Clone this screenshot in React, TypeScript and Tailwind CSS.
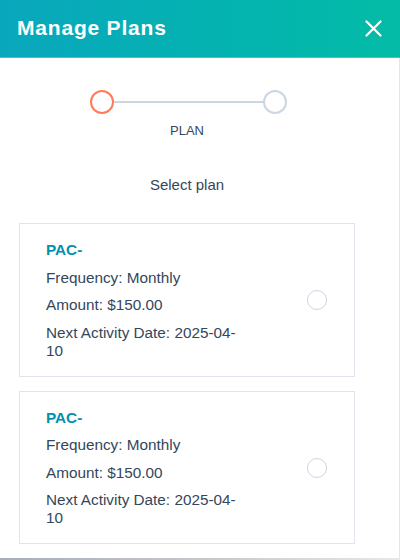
import React from "react";

type Plan = {
  id: string;
  name: string;
  frequency: string;
  amount: string;
  nextDate: [string, string];
};

const plans: Plan[] = [
  { id: "1", name: "PAC-", frequency: "Monthly", amount: "$150.00", nextDate: ["2025-04-", "10"] },
  { id: "2", name: "PAC-", frequency: "Monthly", amount: "$150.00", nextDate: ["2025-04-", "10"] },
];

const CloseIcon = () => (
  <svg width="17" height="17" viewBox="0 0 17 17" fill="none">
    <path d="M1.5 1.5L15.5 15.5M15.5 1.5L1.5 15.5" stroke="white" strokeWidth="2.2" strokeLinecap="round" />
  </svg>
);

const PlanCard = ({ plan }: { plan: Plan }) => (
  <div className="flex items-center border border-[#dfe3eb] bg-white pl-[26px] pr-[27px] pt-[17px] pb-[16px]">
    <div className="flex flex-1 flex-col gap-[9.5px] text-[15.3px] leading-[18px] text-[#33475b]">
      <div className="font-bold text-[#0091ae]">{plan.name}</div>
      <div>Frequency: {plan.frequency}</div>
      <div>Amount: {plan.amount}</div>
      <div>
        Next Activity Date: {plan.nextDate[0]}
        <br />
        {plan.nextDate[1]}
      </div>
    </div>
    <div className="size-5 shrink-0 rounded-full border-[1.5px] border-[#cbd6e2] bg-white" />
  </div>
);

export default function App() {
  return (
    <div className="flex h-[560px] w-[400px] flex-col bg-white font-['Liberation_Sans',Arial,sans-serif]">
      <div className="flex h-[58px] shrink-0 items-center justify-between border-b border-[#3cc6d2] bg-gradient-to-r from-[#0aa7bc] to-[#03bca6] pl-[17px] pr-[18px] pb-[9px] pt-[8px]">
        <h1 className="text-[21px] font-bold tracking-[0.8px] text-white">Manage Plans</h1>
        <CloseIcon />
      </div>

      <div className="flex flex-1 flex-col border-r border-[#e3e7ec] pl-[19px] pr-[44px]">
        <div className="mt-[32px] ml-[71px] flex items-center">
          <div className="size-6 rounded-full border-2 border-[#ff7a59]" />
          <div className="h-[2px] w-[149px] bg-[#cbd6e2]" />
          <div className="size-6 rounded-full border-2 border-[#cbd6e2]" />
        </div>
        <div className="mt-[9px] text-center text-[13px] leading-[16px] text-[#33475b]">PLAN</div>
        <div className="mt-[36px] text-center text-[15px] leading-[20px] text-[#33475b]">Select plan</div>

        <div className="mt-[28px] flex flex-col gap-[14px]">
          {plans.map((p) => (
            <PlanCard key={p.id} plan={p} />
          ))}
        </div>
      </div>

      <div className="h-[2px] shrink-0 bg-gradient-to-r from-[#a7aeb6] via-[#c3c8cd] to-[#e6e8eb]" />
    </div>
  );
}
